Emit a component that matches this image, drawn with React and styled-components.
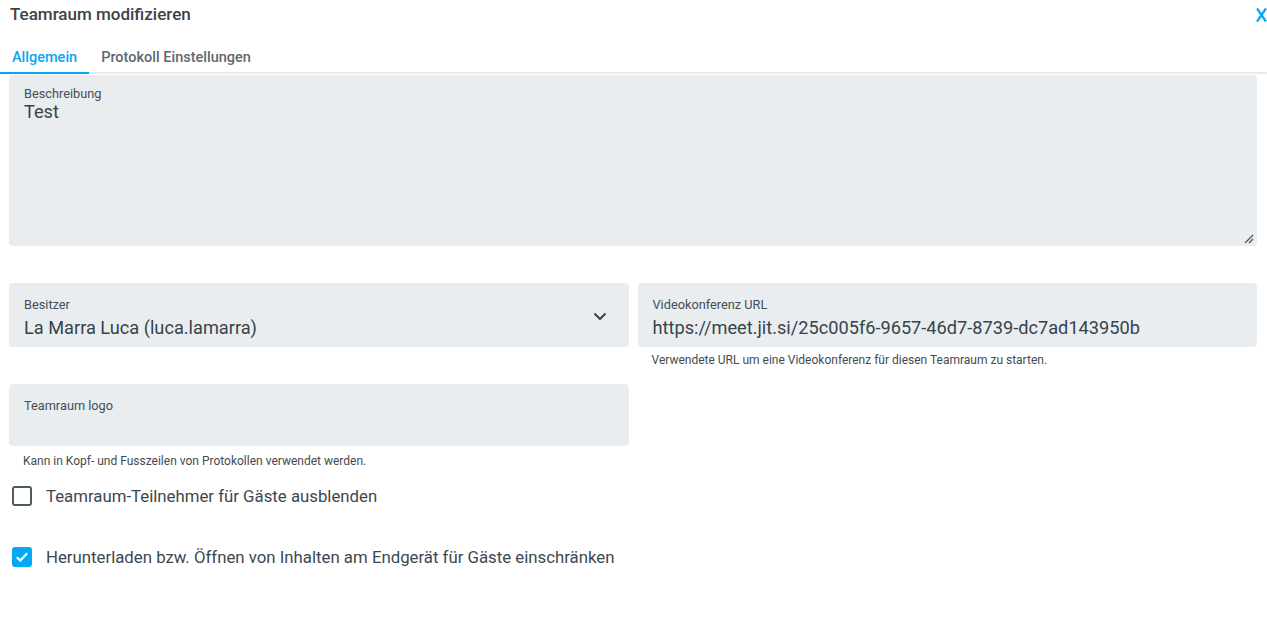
import React from "react";
import styled, { createGlobalStyle, css } from "styled-components";

const GlobalStyle = createGlobalStyle`
  html, body {
    margin: 0;
    padding: 0;
    background: #ffffff;
    overflow: hidden;
  }
  body {
    font-family: Roboto, "Noto Sans", "Liberation Sans", sans-serif;
    color: #3c4850;
  }
  * { box-sizing: border-box; }
`;

const Page = styled.div`
  width: 1267px;
  height: 628px;
  display: flex;
  flex-direction: column;
`;

const Header = styled.header`
  display: flex;
  align-items: flex-start;
  justify-content: space-between;
  padding: 2px 0 0 10px;
  height: 36px;
`;

const Title = styled.h1`
  margin: 0;
  font-size: 17px;
  line-height: 24px;
  font-weight: 500;
  color: #3d4347;
`;

const CloseButton = styled.button`
  border: 0;
  background: transparent;
  padding: 0;
  margin: 5px 0 0 0;
  width: 11px;
  height: 16px;
  display: flex;
  cursor: pointer;
`;

const TabBar = styled.nav`
  display: flex;
  border-bottom: 2px solid #e8ebee;
`;

const Tab = styled.div`
  padding: 12px 12px 4px;
  margin-bottom: -2px;
  font-size: 14.5px;
  line-height: 20px;
  font-weight: 500;
  color: #5d6870;
  border-bottom: 2px solid transparent;
  cursor: pointer;
  ${(p) =>
    p.$active &&
    css`
      color: #03a9f4;
      border-bottom-color: #03a9f4;
    `}
`;

const Form = styled.div`
  padding: 1px 10px 0 9px;
  display: flex;
  flex-direction: column;
`;

const FieldBox = styled.div`
  position: relative;
  background: #e9edf0;
  border-radius: 4px;
  padding: ${(p) => p.$pad || "15px"} 22px 0 15px;
  height: ${(p) => p.$h}px;
  display: flex;
  align-items: flex-start;
`;

const FieldText = styled.div`
  flex: 1;
  display: flex;
  flex-direction: column;
  gap: ${(p) => p.$gap || 0}px;
`;

const FieldLabel = styled.label`
  font-size: 12.75px;
  line-height: 14px;
  color: #434e56;
`;

const FieldValue = styled.div`
  font-size: 18.2px;
  line-height: 22px;
  color: #37434b;
`;

const Chevron = styled.svg`
  margin-top: 14px;
  flex: none;
`;

const ResizeHandle = styled.svg`
  position: absolute;
  right: 3px;
  bottom: 2px;
`;

const Grid = styled.div`
  margin-top: 37px;
  display: grid;
  grid-template-columns: 1fr 1fr;
  column-gap: 9px;
  row-gap: 17px;
`;

const FieldGroup = styled.div`
  display: flex;
  flex-direction: column;
`;

const Helper = styled.div`
  padding: ${(p) => p.$top}px 0 0 14px;
  font-size: 12px;
  line-height: 14px;
  color: #444b50;
`;

const CheckList = styled.div`
  margin-top: 8px;
  display: flex;
  flex-direction: column;
  gap: 21px;
`;

const CheckRow = styled.label`
  display: flex;
  align-items: center;
  height: 40px;
  padding-left: 3px;
  gap: 14px;
  font-size: 16.8px;
  color: #3c4850;
  cursor: pointer;
`;

const Box = styled.span`
  width: 20px;
  height: 20px;
  border-radius: 3px;
  flex: none;
  display: flex;
  align-items: center;
  justify-content: center;
  border: 2px solid #4b5960;
  ${(p) =>
    p.$checked &&
    css`
      border-color: #03a9f4;
      background: #03a9f4;
    `}
`;

function Checkbox({ checked, children }) {
  return (
    <CheckRow>
      <Box $checked={checked}>
        {checked && (
          <svg width="14" height="12" viewBox="0 0 14 12">
            <path d="M1.8 6.2 L5.3 9.6 L12.2 2.2" fill="none" stroke="#fff" strokeWidth="2.2" />
          </svg>
        )}
      </Box>
      {children}
    </CheckRow>
  );
}

export default function App() {
  return (
    <>
      <GlobalStyle />
      <Page>
        <Header>
          <Title>Teamraum modifizieren</Title>
          <CloseButton aria-label="Schliessen">
            <svg width="11" height="16" viewBox="0 0 11 16">
              <path d="M1 1.5 L10 14.5 M10 1.5 L1 14.5" stroke="#03a9f4" strokeWidth="2.2" fill="none" />
            </svg>
          </CloseButton>
        </Header>
        <TabBar>
          <Tab $active>Allgemein</Tab>
          <Tab>Protokoll Einstellungen</Tab>
        </TabBar>
        <Form>
          <FieldBox $h={171} $pad="12px">
            <FieldText>
              <FieldLabel>Beschreibung</FieldLabel>
              <FieldValue>Test</FieldValue>
            </FieldText>
            <ResizeHandle width="11" height="11" viewBox="0 0 11 11">
              <path d="M2 10 L10 2 M6 10 L10 6" stroke="#555" strokeWidth="1.3" fill="none" />
            </ResizeHandle>
          </FieldBox>
          <Grid>
            <FieldGroup>
              <FieldBox $h={64}>
                <FieldText $gap={5}>
                  <FieldLabel>Besitzer</FieldLabel>
                  <FieldValue>La Marra Luca (luca.lamarra)</FieldValue>
                </FieldText>
                <Chevron width="14" height="9" viewBox="0 0 14 9">
                  <path d="M1.5 1.5 L7 7 L12.5 1.5" stroke="#37474f" strokeWidth="2.2" fill="none" />
                </Chevron>
              </FieldBox>
            </FieldGroup>
            <FieldGroup>
              <FieldBox $h={64}>
                <FieldText $gap={5}>
                  <FieldLabel>Videokonferenz URL</FieldLabel>
                  <FieldValue>https://meet.jit.si/25c005f6-9657-46d7-8739-dc7ad143950b</FieldValue>
                </FieldText>
              </FieldBox>
              <Helper $top={6}>Verwendete URL um eine Videokonferenz für diesen Teamraum zu starten.</Helper>
            </FieldGroup>
            <FieldGroup>
              <FieldBox $h={62}>
                <FieldText>
                  <FieldLabel>Teamraum logo</FieldLabel>
                </FieldText>
              </FieldBox>
              <Helper $top={8}>Kann in Kopf- und Fusszeilen von Protokollen verwendet werden.</Helper>
            </FieldGroup>
          </Grid>
          <CheckList>
            <Checkbox>Teamraum-Teilnehmer für Gäste ausblenden</Checkbox>
            <Checkbox checked>Herunterladen bzw. Öffnen von Inhalten am Endgerät für Gäste einschränken</Checkbox>
          </CheckList>
        </Form>
      </Page>
    </>
  );
}
